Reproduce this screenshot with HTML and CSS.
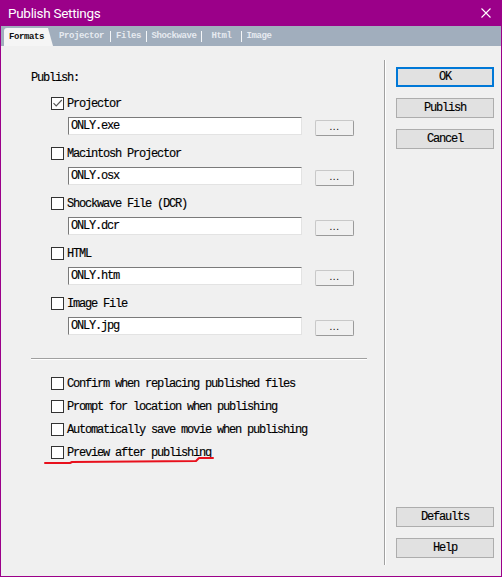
FILE: index.html
```html
<!DOCTYPE html>
<html>
<head>
<meta charset="utf-8">
<title>Publish Settings</title>
<link rel="stylesheet" href="styles.css">
</head>
<body>
<div class="window">
  <div class="titlebar">
    <span class="title">Publish Settings</span>
    <svg class="close" width="10" height="10" viewBox="0 0 10 10"><path d="M0.5 0.5 L9.5 9.5 M9.5 0.5 L0.5 9.5" stroke="#fff" stroke-width="1.1" fill="none"/></svg>
  </div>
  <div class="tabs">
    <div class="tab active">Formats</div>
    <div class="tab t-projector">Projector</div>
    <div class="tab t-files">Files</div>
    <div class="tab t-shockwave">Shockwave</div>
    <div class="tab t-html">Html</div>
    <div class="tab t-image">Image</div>
  </div>
  <div class="content">
    <div class="main">
      <div class="label">Publish:</div>

      <div class="group">
        <div class="check"><span class="box"><svg width="11" height="11" viewBox="0 0 11 11"><path d="M1.5 5.2 L4.2 8 L9.8 2" stroke="#555" stroke-width="1.1" fill="none"/></svg></span>Projector</div>
        <div class="file-row"><div class="field">ONLY.exe</div><div class="browse">...</div></div>
      </div>

      <div class="group">
        <div class="check"><span class="box"></span>Macintosh Projector</div>
        <div class="file-row"><div class="field">ONLY.osx</div><div class="browse">...</div></div>
      </div>

      <div class="group">
        <div class="check"><span class="box"></span>Shockwave File (DCR)</div>
        <div class="file-row"><div class="field">ONLY.dcr</div><div class="browse">...</div></div>
      </div>

      <div class="group">
        <div class="check"><span class="box"></span>HTML</div>
        <div class="file-row"><div class="field">ONLY.htm</div><div class="browse">...</div></div>
      </div>

      <div class="group">
        <div class="check"><span class="box"></span>Image File</div>
        <div class="file-row"><div class="field">ONLY.jpg</div><div class="browse">...</div></div>
      </div>

      <div class="sep"></div>

      <div class="options">
        <div class="check"><span class="box"></span>Confirm when replacing published files</div>
        <div class="check"><span class="box"></span>Prompt for location when publishing</div>
        <div class="check"><span class="box"></span>Automatically save movie when publishing</div>
        <div class="check"><span class="box"></span>Preview after publishing</div>
      </div>
    </div>
    <div class="side">
      <div class="btn default">OK</div>
      <div class="btn">Publish</div>
      <div class="btn">Cancel</div>
      <div class="btn push">Defaults</div>
      <div class="btn">Help</div>
    </div>
  </div>
  <svg class="annot" width="171" height="9" viewBox="0 0 171 9"><polyline points="1,7 26,7 28,6 152,5 155,2 169,2" stroke="#e8101c" stroke-width="2" fill="none" stroke-linejoin="round" stroke-linecap="round"/></svg>
</div>
</body>
</html>
```

FILE: styles.css
```css
html, body {
  margin: 0;
  padding: 0;
  background: #f0f0f0;
}

.window {
  position: relative;
  width: 502px;
  height: 577px;
  box-sizing: border-box;
  border: 1px solid #9b0089;
  border-top: 0;
  background: #f0f0f0;
  display: flex;
  flex-direction: column;
  font-family: "Liberation Mono", monospace;
  font-size: 12px;
  letter-spacing: -1.2px;
  color: #000;
  -webkit-text-stroke: 0.15px #000;
}

.titlebar {
  height: 26px;
  flex: none;
  background: #9b0089;
  display: flex;
  align-items: center;
  justify-content: space-between;
  padding: 0 10px 0 7px;
}

.title {
  font-family: Roboto, "Liberation Sans", sans-serif;
  font-size: 13.5px;
  letter-spacing: -0.3px;
  color: #fff;
  -webkit-text-stroke: 0;
}

.close {
  display: block;
}

.tabs {
  height: 20px;
  flex: none;
  background: #a1aebd;
  display: flex;
  align-items: flex-end;
  padding-left: 3px;
  font-size: 9px;
  font-weight: bold;
  letter-spacing: -0.4px;
  -webkit-text-stroke: 0;
}

.tab {
  height: 11px;
  line-height: 11px;
  margin-bottom: 4px;
  text-align: center;
  color: #e6eaf0;
  border-left: 1px solid #f4f6f8;
  box-sizing: border-box;
}

.tab.active {
  width: 49px;
  height: 18px;
  line-height: 18px;
  margin-bottom: 0;
  border-left: 0;
  text-align: left;
  padding-left: 5px;
  background: #f5f5f5;
  color: #111;
  border-top-left-radius: 3px;
  clip-path: polygon(0 0, 44px 0, 49px 100%, 0 100%);
}

.t-projector { width: 57px; border-left: 0; }
.t-files { width: 36px; }
.t-shockwave { width: 55px; }
.t-html { width: 40px; }
.t-image { width: 35px; }

.content {
  flex: 1;
  display: flex;
  padding: 14px 0 11px;
  min-height: 0;
}

.main {
  width: 384px;
  box-sizing: border-box;
  border-right: 1px solid #a0a0a0;
  padding: 9px 0 0 30px;
  display: flex;
  flex-direction: column;
}

.label {
  height: 16px;
  line-height: 16px;
  margin-bottom: 10px;
  padding-top: 1px;
  box-sizing: border-box;
}

.group {
  margin-bottom: 9px;
}

.check {
  display: flex;
  align-items: center;
  gap: 3px;
  height: 16px;
  line-height: 16px;
  padding-top: 1px;
  box-sizing: border-box;
  margin-left: 20px;
  white-space: nowrap;
}

.box {
  width: 13px;
  height: 13px;
  box-sizing: border-box;
  border: 1px solid #333;
  background: #fff;
  flex: none;
  display: flex;
  -webkit-text-stroke: 0;
}

.box svg {
  display: block;
}

.file-row {
  display: flex;
  align-items: flex-start;
  height: 19px;
  margin-top: 6px;
  margin-left: 37px;
}

.field {
  width: 234px;
  height: 18px;
  box-sizing: border-box;
  background: #fff;
  border-top: 1px solid #7a7a7a;
  border-left: 1px solid #7a7a7a;
  border-right: 1px solid #e3e3e3;
  border-bottom: 1px solid #e3e3e3;
  padding-left: 2px;
  line-height: 16px;
}

.browse {
  width: 39px;
  height: 16px;
  box-sizing: border-box;
  margin: 3px 0 0 13px;
  border: 1px solid #c8c8c8;
  border-right-color: #9a9a9a;
  border-bottom-color: #9a9a9a;
  border-radius: 2px;
  background: #f0f0f0;
  text-align: center;
  font-family: "Liberation Sans", sans-serif;
  font-size: 10px;
  letter-spacing: 0.5px;
  line-height: 12px;
  -webkit-text-stroke: 0;
}

.sep {
  width: 336px;
  height: 1px;
  flex: none;
  background: #a0a0a0;
  box-shadow: 0 1px 0 #fff;
  margin-top: 13px;
}

.options {
  margin-top: 16px;
  display: flex;
  flex-direction: column;
  gap: 7px;
}

.side {
  flex: 1;
  box-shadow: inset 1px 0 0 #fff;
  padding: 7px 0 7px 11px;
  display: flex;
  flex-direction: column;
  gap: 11px;
}

.btn {
  width: 98px;
  height: 20px;
  box-sizing: border-box;
  border: 1px solid #adadad;
  background: #e1e1e1;
  text-align: center;
  line-height: 18px;
}

.btn.default {
  border: 2px solid #0078d7;
  line-height: 16px;
}

.btn.push {
  margin-top: auto;
}

.annot {
  position: absolute;
  left: 43px;
  top: 456px;
  pointer-events: none;
}
```
